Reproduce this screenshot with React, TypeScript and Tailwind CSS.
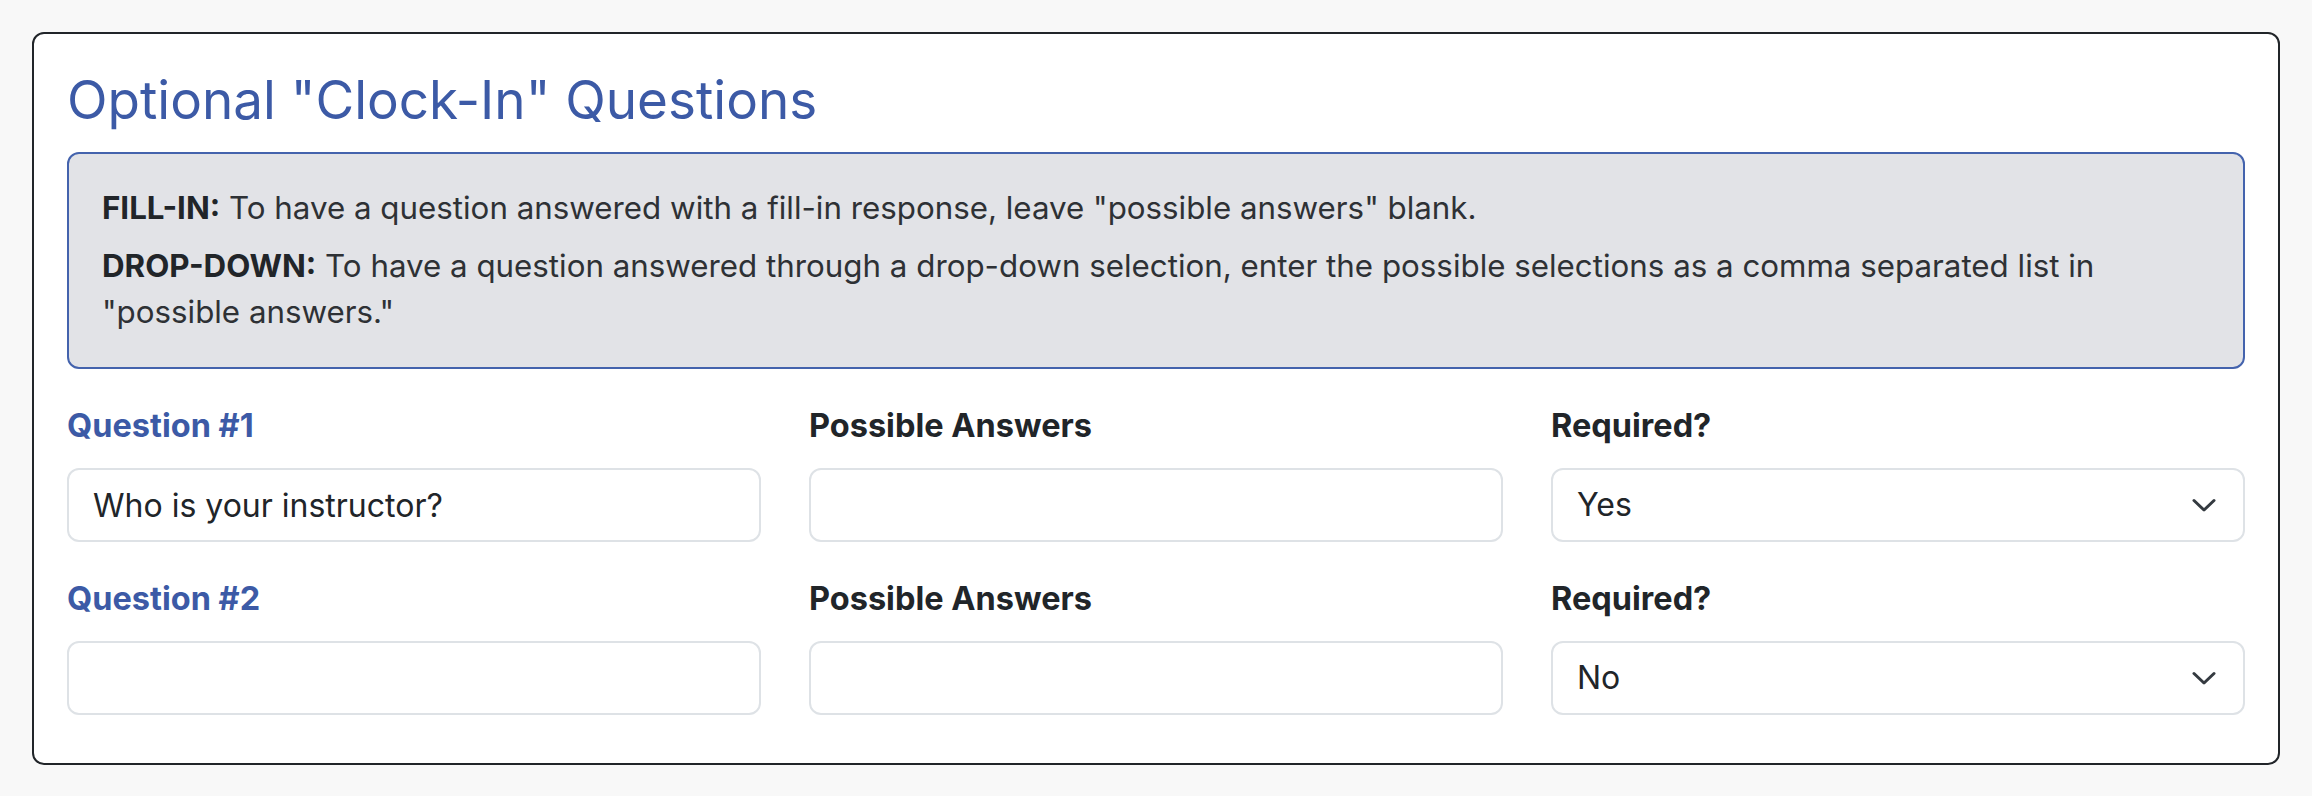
import { useState } from 'react'

interface QuestionRowProps {
  index: number
  question: string
  required: string
}

function QuestionRow({ index, question, required }: QuestionRowProps) {
  const [value, setValue] = useState(question)
  const [answers, setAnswers] = useState('')
  const [req, setReq] = useState(required)

  return (
    <div className="grid grid-cols-3 gap-x-[48px] mt-[34px]">
      <div>
        <label className="block text-[32.5px] leading-[46px] font-bold text-[#3c5aa6] mb-[19px]">
          Question #{index}
        </label>
        <input
          value={value}
          onChange={(e) => setValue(e.target.value)}
          className="block w-full h-[74px] px-[24px] text-[32px] text-[#212529] bg-white border-2 border-[#dee2e6] rounded-[12px] outline-none"
        />
      </div>
      <div>
        <label className="block text-[32.5px] leading-[46px] font-bold text-[#212529] mb-[19px]">
          Possible Answers
        </label>
        <input
          value={answers}
          onChange={(e) => setAnswers(e.target.value)}
          className="block w-full h-[74px] px-[24px] text-[32px] text-[#212529] bg-white border-2 border-[#dee2e6] rounded-[12px] outline-none"
        />
      </div>
      <div>
        <label className="block text-[32.5px] leading-[46px] font-bold text-[#212529] mb-[19px]">
          Required?
        </label>
        <div className="relative">
          <select
            value={req}
            onChange={(e) => setReq(e.target.value)}
            className="block w-full h-[74px] pl-[24px] pr-[80px] text-[32px] text-[#212529] bg-white border-2 border-[#dee2e6] rounded-[12px] outline-none appearance-none"
          >
            <option>Yes</option>
            <option>No</option>
          </select>
          <svg
            className="absolute right-[29px] top-1/2 -translate-y-1/2 pointer-events-none"
            width="24"
            height="16"
            viewBox="0 0 24 16"
            fill="none"
          >
            <path d="M2 3.5l10 9.5 10-9.5" stroke="#343a40" strokeWidth="3" strokeLinecap="round" strokeLinejoin="round" />
          </svg>
        </div>
      </div>
    </div>
  )
}

export default function App() {
  return (
    <div className="min-h-screen bg-[#f8f8f8] p-[32px] font-['Inter','Noto_Sans',sans-serif]">
      <div className="bg-white border-2 border-[#212529] rounded-[12px] px-[33px] pt-[35px] pb-[48px]">
        <h2 className="text-[53px] leading-[62px] font-normal text-[#3c5aa6] mb-[21px]">
          Optional "Clock-In" Questions
        </h2>

        <div className="bg-[#e2e3e7] border-2 border-[#4463ad] rounded-[12px] px-[33px] pt-[31px] pb-[32px] text-[31.3px] leading-[46px] text-[#2e3135]">
          <p className="mb-[12px]">
            <span className="font-bold text-[#212529]">FILL-IN:</span> To have a question answered with a fill-in response, leave "possible answers" blank.
          </p>
          <p>
            <span className="font-bold text-[#212529]">DROP-DOWN:</span> To have a question answered through a drop-down selection, enter the possible selections as a comma separated list in "possible answers."
          </p>
        </div>

        <QuestionRow index={1} question="Who is your instructor?" required="Yes" />
        <QuestionRow index={2} question="" required="No" />
      </div>
    </div>
  )
}
